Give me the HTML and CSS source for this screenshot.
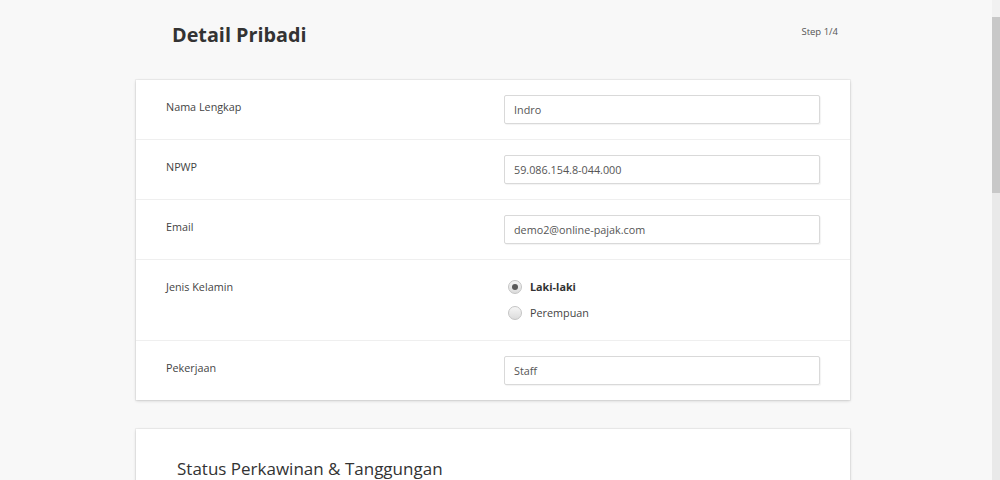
FILE: index.html
```html
<!DOCTYPE html>
<html lang="id">
<head>
<meta charset="utf-8">
<title>Detail Pribadi</title>
<link rel="stylesheet" href="styles.css">
</head>
<body>
<div class="page">
  <div class="header">
    <h1 class="title">Detail Pribadi</h1>
    <span class="step">Step 1/4</span>
  </div>

  <div class="card">
    <div class="row">
      <div class="label">Nama Lengkap</div>
      <div class="field"><input class="input" type="text" value="Indro"></div>
    </div>
    <div class="row">
      <div class="label">NPWP</div>
      <div class="field"><input class="input" type="text" value="59.086.154.8-044.000"></div>
    </div>
    <div class="row">
      <div class="label">Email</div>
      <div class="field"><input class="input" type="text" value="demo2@online-pajak.com"></div>
    </div>
    <div class="row">
      <div class="label">Jenis Kelamin</div>
      <div class="field radios">
        <div class="radio-item"><span class="radio checked"></span><span class="radio-label bold">Laki-laki</span></div>
        <div class="radio-item"><span class="radio"></span><span class="radio-label">Perempuan</span></div>
      </div>
    </div>
    <div class="row">
      <div class="label">Pekerjaan</div>
      <div class="field"><input class="input" type="text" value="Staff"></div>
    </div>
  </div>

  <div class="card card-second">
    <h2 class="section-title">Status Perkawinan &amp; Tanggungan</h2>
  </div>
</div>
<div class="scrollbar"><div class="scroll-btn"></div><div class="scroll-thumb"></div></div>
</body>
</html>
```

FILE: styles.css
```css
html, body {
  margin: 0;
  padding: 0;
  height: 100%;
  overflow: hidden;
  background: #f8f8f8;
}

body {
  font-family: "Open Sans", "Liberation Sans", sans-serif;
  color: #444;
}

.page {
  width: 714px;
  margin-left: 136px;
}

.header {
  display: flex;
  justify-content: space-between;
  align-items: flex-start;
  padding: 21px 12px 31px 36px;
}

.title {
  margin: 0;
  font-size: 19.8px;
  line-height: 28px;
  font-weight: 700;
  color: #333;
}

.step {
  margin-top: 4px;
  font-size: 9.5px;
  line-height: 14px;
  color: #555;
}

.card {
  background: #fff;
  box-shadow: 0 0 0 1px rgba(0, 0, 0, 0.04), 0 1px 3px rgba(0, 0, 0, 0.16);
}

.row {
  display: flex;
  padding: 15px 30px 15px 30px;
  border-bottom: 1px solid #efefef;
}

.row:last-child {
  border-bottom: none;
}

.label {
  flex: 1;
  margin-top: 3px;
  font-size: 10.8px;
  line-height: 18px;
  color: #444;
}

.field {
  width: 316px;
}

.input {
  display: block;
  box-sizing: border-box;
  width: 316px;
  height: 29px;
  margin: 0;
  padding: 0 9px;
  border: 1px solid #d9d9d9;
  border-radius: 2px;
  box-shadow: 1px 1px 1px rgba(0, 0, 0, 0.05);
  background: #fff;
  font-family: "Open Sans", "Liberation Sans", sans-serif;
  font-size: 10.8px;
  color: #555;
  outline: none;
}

.radios {
  display: flex;
  flex-direction: column;
  gap: 2px;
}

.radio-item {
  display: flex;
  align-items: center;
  height: 24px;
  padding-left: 4px;
}

.radio {
  box-sizing: border-box;
  width: 14px;
  height: 14px;
  border-radius: 50%;
  border: 1px solid #c4c4c4;
  background: linear-gradient(#f6f6f6, #dcdcdc);
  display: flex;
  align-items: center;
  justify-content: center;
  margin-right: 8px;
}

.radio.checked::after {
  content: "";
  width: 6px;
  height: 6px;
  border-radius: 50%;
  background: #5a5a5a;
}

.radio-label {
  font-size: 10.8px;
  line-height: 18px;
  color: #444;
}

.radio-label.bold {
  font-weight: 700;
  color: #333;
}

.card-second {
  margin-top: 29px;
  padding: 28px 41px 40px;
}

.section-title {
  margin: 0;
  font-size: 17px;
  line-height: 24px;
  font-weight: 400;
  color: #333;
}

.scrollbar {
  position: fixed;
  top: 0;
  right: 0;
  width: 8px;
  height: 100%;
  background: #e9e9e9;
}

.scroll-btn {
  height: 17px;
  background: #f1f1f1;
}

.scroll-thumb {
  height: 176px;
  background: #c8c8c8;
}
```
